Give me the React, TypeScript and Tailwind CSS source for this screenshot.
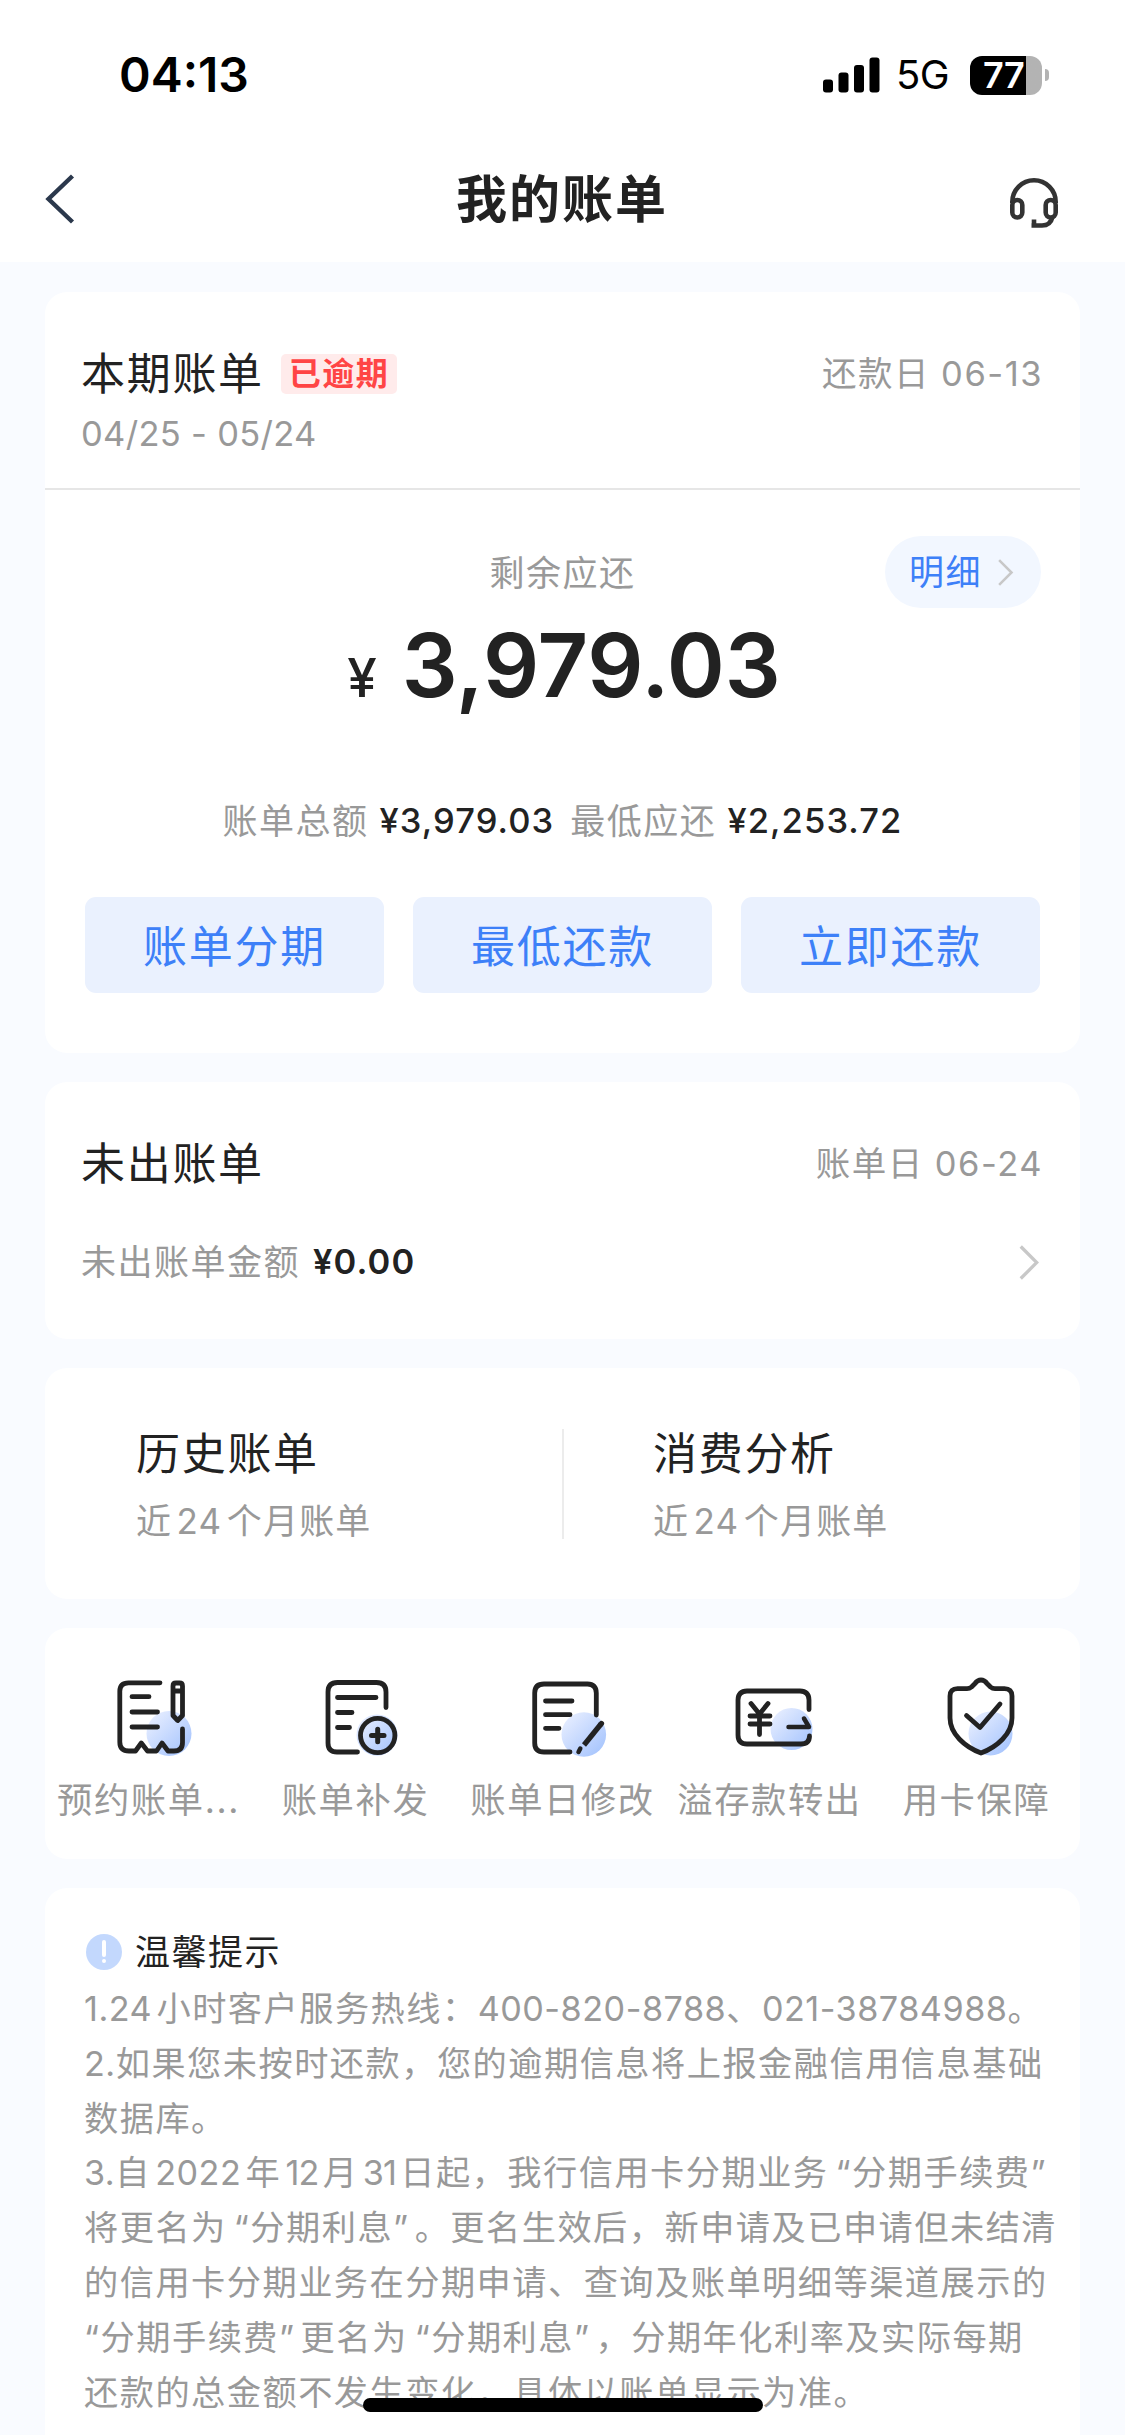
import { ReactNode } from 'react';

interface IServiceItem {
    label: string;
    icon: ReactNode;
}

interface IChevronProps {
    className: string;
}

const INK = '#222222'

function Blob ({id, cx, cy, r}: {id: string; cx: number; cy: number; r: number}) {
    return (
        <g stroke="none">
            <defs>
                <linearGradient id={id} x1="0" y1="0" x2="1" y2="1">
                    <stop offset="0.1" stopColor="#e6edff" />
                    <stop offset="1" stopColor="#9fc0fd" />
                </linearGradient>
            </defs>
            <circle cx={cx} cy={cy} r={r} fill={`url(#${id})`} />
        </g>
    )
}

function ServiceSvg ({children}: {children: ReactNode}) {
    return (
        <svg className="h-[90px] w-[90px]" viewBox="0 0 90 90" fill="none" stroke={INK} strokeWidth="4.8" strokeLinecap="round" strokeLinejoin="round">
            {children}
        </svg>
    )
}

const services: IServiceItem[] = [
    {
        label: '预约账单...',
        icon: (
            <ServiceSvg>
                <Blob id="blob-reserve" cx={65} cy={61.5} r={22.5} />
                <path d="M56 10.8H24.5Q15.8 10.8 15.8 19.3V70Q15.8 79 25 79H31.5L37.3 71L43.5 79H52.5L58 71L64 79H70Q78.5 79 78.5 70.5V57" />
                <path d="M28 24.7H45M28 40H53.5M28 55H53.5" />
                <path d="M69 17V14Q69 11 72 11H75.5Q78.5 11 78.5 14V43.5L73.7 48.5L69 43.5ZM69 19H78.5" />
            </ServiceSvg>
        ),
    },
    {
        label: '账单补发',
        icon: (
            <ServiceSvg>
                <Blob id="blob-resend" cx={66} cy={63} r={20.5} />
                <path d="M75 35.5V20Q75 10.5 65.5 10.5H26.5Q17 10.5 17 20V71Q17 80 26 80H46.5" />
                <path d="M26.5 25.5H65M26.5 40.5H41M26.5 55.5H38.5" />
                <circle cx="66.7" cy="63.5" r="17.2" />
                <path d="M60.5 63.5H73M66.7 57.3V69.7" strokeWidth="5" />
            </ServiceSvg>
        ),
    },
    {
        label: '账单日修改',
        icon: (
            <ServiceSvg>
                <Blob id="blob-edit" cx={65.8} cy={62.5} r={22.3} />
                <path d="M78.3 43V21Q78.3 12 69.5 12H26Q16.7 12 16.7 21V71Q16.7 80 26 80H52" />
                <path d="M27.5 29H54M27.5 42.7H52M27.5 56.3H41" />
                <path d="M83 52L66 73" strokeWidth="5.2" strokeLinecap="butt" />
                <path d="M83.5 51.5L82.5 52.7" strokeWidth="5.2" />
                <path d="M62.3 76.5L60.5 80" strokeWidth="4.5" />
            </ServiceSvg>
        ),
    },
    {
        label: '溢存款转出',
        icon: (
            <ServiceSvg>
                <Blob id="blob-transfer" cx={66.5} cy={57} r={21} />
                <path d="M84 37.5V28Q84 19 75 19H22Q13 19 13 28V63Q13 72 22 72H76Q84.5 72 84.5 64" />
                <path d="M26 31.5L34.5 42L43 31.5M25 44H45M25 52H45M34.5 42V62.5" />
                <path d="M63.5 55H84L79 46.5" strokeWidth="4.5" />
            </ServiceSvg>
        ),
    },
    {
        label: '用卡保障',
        icon: (
            <ServiceSvg>
                <Blob id="blob-shield" cx={58.5} cy={61.5} r={22} />
                <path d="M49 8Q45.5 8 43 11.5L39.5 15Q37.5 16.7 35 16.7H25.5Q18 16.7 18 24V46C18 62 33 75 49 81C65 75 80 62 80 46V24Q80 16.7 72.5 16.7H63Q60.5 16.7 58.5 15L55 11.5Q52.5 8 49 8Z" />
                <path d="M34.5 43.5L48 55.5L68 32" />
            </ServiceSvg>
        ),
    },
]

const notes: string[] = [
    '1.24小时客户服务热线：400-820-8788、021-38784988。',
    '2.如果您未按时还款，您的逾期信息将上报金融信用信息基础',
    '数据库。',
    '3.自2022年12月31日起，我行信用卡分期业务“分期手续费”',
    '将更名为“分期利息”。更名生效后，新申请及已申请但未结清',
    '的信用卡分期业务在分期申请、查询及账单明细等渠道展示的',
    '“分期手续费”更名为“分期利息”，分期年化利率及实际每期',
    '还款的总金额不发生变化，具体以账单显示为准。',
]

// numbers are set tighter than the characters around them, quotes a little looser
function NoteLine ({text}: {text: string}) {
    return (
        <p>
            {text.split(/([\d.-]+|“|”)/).map((part, i, parts) => {
                if (part === '“') return <span key={i} className={parts[i - 1] ? 'ml-[7px]' : ''}>{part}</span>
                if (part === '”') return <span key={i} className="mr-[5px]">{part}</span>
                if (/^\d{2}$/.test(part)) return <span key={i} className="tracking-[-0.9px]">{part}</span>
                if (/^[\d.-]+$/.test(part)) return <span key={i} className="tracking-[0.5px]">{part}</span>
                return part
            })}
        </p>
    )
}

function Chevron ({className}: IChevronProps) {
    return (
        <svg className={className} viewBox="0 0 20 36" fill="none" stroke="#c8c8c8" strokeWidth="3.4">
            <path d="M1.5 1.5L18 18L1.5 34.5" />
        </svg>
    )
}

function StatusBar () {
    return (
        <div className="flex h-[150px] items-center justify-between pl-[119px] pr-[76px]">
            <span className="text-[48px] font-semibold leading-[50px] text-black">04:13</span>
            <div className="flex items-center">
                <svg className="h-[36px] w-[57px]" viewBox="0 0 57 36">
                    <rect x="0" y="22.5" width="10" height="13" rx="3" />
                    <rect x="15.5" y="15.5" width="10" height="20" rx="3" />
                    <rect x="31" y="8" width="10" height="27.5" rx="3" />
                    <rect x="46.5" y="0.5" width="10" height="35" rx="3" />
                </svg>
                <span className="ml-[16px] w-[55px] text-[40px] leading-[50px] tracking-[-0.5px] text-black">5G</span>
                <div className="ml-[19px] flex h-[39px] w-[72px] items-center rounded-[12px] bg-linear-to-r from-black from-[56px] to-[#b3b3b3] to-[56px] pl-[13px]">
                    <span className="text-[36px] font-semibold leading-[39px] tracking-[-0.5px] text-white">77</span>
                </div>
                <div className="ml-[3px] h-[12px] w-[4px] rounded-r-full bg-[#b3b3b3]" />
            </div>
        </div>
    )
}

function Header () {
    return (
        <div className="grid h-[112px] grid-cols-[1fr_auto_1fr] items-center pl-[45px] pr-[65px]">
            <svg className="mt-[-14px] h-[50px] w-[30px]" viewBox="0 0 30 50" fill="none" stroke="#2b384c" strokeWidth="4.4">
                <path d="M27.5 2L3.5 25L27.5 48" />
            </svg>
            <h1 className="mt-[-13px] pl-[19px] text-[51px] font-bold leading-[60px] tracking-[2px]">我的账单</h1>
            <svg className="mt-[-7px] h-[54px] w-[52px] justify-self-end" viewBox="0 0 52 54" fill="none" stroke="#333333" strokeWidth="4.6">
                <path d="M4.3 27V26A21.7 21.7 0 0 1 47.7 26V27" />
                <rect x="4.3" y="24" width="10" height="17.5" rx="5" />
                <rect x="37.7" y="24" width="10" height="17.5" rx="5" />
                <path d="M44.5 41Q42.5 49.5 34 49.5H23.5M26 43.5V51.5" />
            </svg>
        </div>
    )
}

export default function App () {
    return (
        <div className="relative h-[2435px] w-[1125px] overflow-hidden bg-[#f9fbff] font-['Inter','Noto_Sans_CJK_SC',sans-serif] text-[#222222] [text-autospace:normal]">
            <div className="bg-white">
                <StatusBar />
                <Header />
            </div>

            <div className="flex flex-col gap-[29px] px-[45px] pt-[30px]">
                <section className="h-[761px] rounded-[22px] bg-white">
                    <div className="h-[198px] border-b-2 border-[#e6e6e6] pl-[36px] pr-[37px] pt-[56px]">
                        <div className="flex h-[52px] items-center">
                            <h2 className="text-[44px] leading-[52px] tracking-[1.7px]">本期账单</h2>
                            <span className="ml-[17px] h-[40px] rounded-[5px] bg-[#ffebeb] pl-[8px] pr-[8px] text-[32px] font-bold leading-[39px] tracking-[1.5px] text-[#ff4545]">已逾期</span>
                            <span className="ml-auto text-[34.5px] leading-[52px] tracking-[1.5px] text-[#999999]">还款日 06-13</span>
                        </div>
                        <p className="mt-[9px] text-[34.5px] leading-[50px] tracking-[0.3px] text-[#999999]">04/25 - 05/24</p>
                    </div>
                    <div className="px-[39px] pt-[46px]">
                        <div className="grid grid-cols-[1fr_auto_1fr] items-center">
                            <span className="col-start-2 pt-[2px] text-[35px] leading-[50px] tracking-[1.5px] text-[#999999]">剩余应还</span>
                            <button className="flex h-[72px] w-[156px] items-center justify-self-end rounded-full bg-[#f2f7ff] pl-[24px] text-[35px] tracking-[1.5px] text-[#3d80f8]">
                                明细
                                <Chevron className="ml-[15px] h-[27px] w-[17px]" />
                            </button>
                        </div>
                        <div className="mt-[12px] flex h-[90px] items-baseline justify-center pl-[3px] leading-[90px]">
                            <span className="text-[53px] font-medium">¥</span>
                            <span className="ml-[25px] text-[88px] font-semibold">3,979.03</span>
                        </div>
                        <div className="mt-[86px] flex justify-center text-[35px] leading-[50px] tracking-[1.5px]">
                            <span className="text-[#999999]">账单总额</span>
                            <span className="ml-[11px] text-[34.5px] font-medium tracking-[1.1px]">¥3,979.03</span>
                            <span className="ml-[16px] text-[#999999]">最低应还</span>
                            <span className="ml-[11px] text-[34.5px] font-medium tracking-[1.1px]">¥2,253.72</span>
                        </div>
                        <div className="mt-[51px] grid grid-cols-3 gap-[29px] px-px">
                            {['账单分期', '最低还款', '立即还款'].map((text) => (
                                <button key={text} className="h-[96px] rounded-[11px] bg-[#eaf1fe] pt-[3px] text-[44px] tracking-[1.7px] text-[#3d80f8]">{text}</button>
                            ))}
                        </div>
                    </div>
                </section>

                <section className="h-[257px] rounded-[22px] bg-white pl-[36px] pr-[37px] pt-[56px]">
                    <div className="flex items-center justify-between">
                        <h2 className="text-[44px] leading-[52px] tracking-[1.7px]">未出账单</h2>
                        <span className="text-[34.5px] leading-[52px] tracking-[1.5px] text-[#999999]">账单日 06-24</span>
                    </div>
                    <div className="mt-[47px] flex items-center text-[35px] leading-[50px] tracking-[1.5px]">
                        <span className="text-[#999999]">未出账单金额</span>
                        <span className="ml-[13px] text-[34.5px] font-semibold tracking-[1.1px]">¥0.00</span>
                        <Chevron className="ml-auto mr-[4px] h-[35px] w-[20px]" />
                    </div>
                </section>

                <section className="flex h-[231px] items-center rounded-[22px] bg-white">
                    <div className="w-[517px] pl-[91px] pt-[5px]">
                        <h2 className="text-[44px] leading-[60px] tracking-[1.7px]">历史账单</h2>
                        <p className="mt-[9px] text-[35px] leading-[56px] tracking-[1.2px] text-[#999999]">近24个月账单</p>
                    </div>
                    <div className="h-[110px] w-[2px] bg-[#ececec]" />
                    <div className="pl-[89px] pt-[5px]">
                        <h2 className="text-[44px] leading-[60px] tracking-[1.7px]">消费分析</h2>
                        <p className="mt-[9px] text-[35px] leading-[56px] tracking-[1.2px] text-[#999999]">近24个月账单</p>
                    </div>
                </section>

                <section className="grid h-[231px] grid-cols-5 rounded-[22px] bg-white pt-[44px]">
                    {services.map((item) => (
                        <div key={item.label} className="flex flex-col items-center">
                            {item.icon}
                            <span className="mt-[13px] whitespace-nowrap text-[35.3px] leading-[52px] tracking-[1.6px] text-[#999999]">{item.label}</span>
                        </div>
                    ))}
                </section>

                <section className="h-[700px] rounded-[22px] bg-white px-[39px] pt-[38px]">
                    <div className="flex items-center">
                        <svg className="ml-[2px] h-[36px] w-[36px]" viewBox="0 0 36 36">
                            <circle cx="18" cy="18" r="18" fill="#c3d8fd" />
                            <path d="M18 8V21" stroke="#ffffff" strokeWidth="4" strokeLinecap="round" />
                            <circle cx="18" cy="27" r="2" fill="#ffffff" />
                        </svg>
                        <h3 className="ml-[13px] text-[35px] leading-[52px] tracking-[1.5px]">温馨提示</h3>
                    </div>
                    <div className="mt-[4px] whitespace-nowrap text-[34.2px] leading-[54.8px] tracking-[1.5px] text-[#999999]">
                        {notes.map((line) => (
                            <NoteLine key={line} text={line} />
                        ))}
                    </div>
                </section>
            </div>

            {/* home indicator */}
            <div className="absolute bottom-[23px] left-[363px] h-[14px] w-[400px] rounded-full bg-black" />
        </div>
    );
}
